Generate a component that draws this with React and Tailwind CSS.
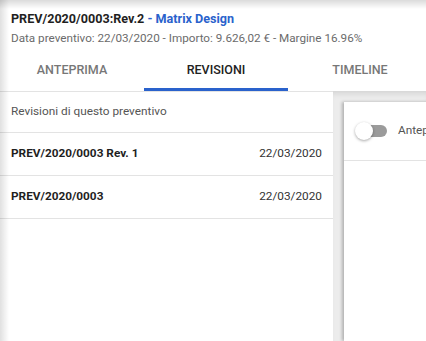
import React from "react";

function Toggle() {
  return (
    <div className="relative w-[32px] h-[18px] flex items-center shrink-0">
      <div className="ml-[4px] w-[28px] h-[12px] rounded-full bg-[#9b9b9b]" />
      <div className="absolute left-0 top-0 w-[18px] h-[18px] rounded-full bg-white shadow-[0_1px_3px_rgba(0,0,0,0.35)]" />
    </div>
  );
}

export default function App() {
  const rows = [
    { name: "PREV/2020/0003 Rev. 1", date: "22/03/2020" },
    { name: "PREV/2020/0003", date: "22/03/2020" },
  ];
  return (
    <div
      className="relative w-[426px] h-[341px] overflow-hidden bg-white text-[#222]"
      style={{ fontFamily: "Roboto, 'Liberation Sans', sans-serif" }}
    >
      <div className="flex flex-col h-full">
        <div className="pl-[11px] pt-[10px] h-[55px]">
          <div className="text-[12.6px] leading-[17px] font-bold text-[#1f1f1f]">
            PREV/2020/0003:Rev.2{" "}
            <span className="text-[#2a62cc]">- Matrix Design</span>
          </div>
          <div className="mt-[3px] text-[11.7px] leading-[16px] text-[#6b6b6b]">
            Data preventivo: 22/03/2020 - Importo: 9.626,02 € - Margine 16.96%
          </div>
        </div>
        <div className="flex w-[432px] h-[36px] shrink-0">
          <div className="w-[144px] flex justify-center pt-[7px] leading-[15px] text-[12.5px] font-medium text-[#777]">
            ANTEPRIMA
          </div>
          <div className="w-[144px] flex justify-center pt-[7px] leading-[15px] text-[12.5px] font-medium text-[#222] border-b-[3px] border-[#2a62cc]">
            REVISIONI
          </div>
          <div className="w-[144px] flex justify-center pt-[7px] leading-[15px] text-[12.5px] font-medium text-[#777]">
            TIMELINE
          </div>
        </div>
        <div className="flex flex-1 min-h-0">
          <div className="w-[333px] shrink-0 bg-white border-t border-[#e3e3e3]">
            <div className="h-[41px] flex items-center pl-[11px] border-b border-[#e3e3e3] text-[11.8px] text-[#555]">
              Revisioni di questo preventivo
            </div>
            {rows.map((r) => (
              <div
                key={r.name}
                className="h-[43px] flex items-center justify-between pl-[11px] pr-[11px] border-b border-[#e3e3e3] text-[11.8px]"
              >
                <span className="font-bold text-[#1f1f1f]">{r.name}</span>
                <span className="text-[#333]">{r.date}</span>
              </div>
            ))}
          </div>
          <div className="flex-1 min-w-0 overflow-hidden bg-[#ececec] pl-[11px] pt-[11px] shadow-[inset_0_6px_6px_-4px_rgba(0,0,0,0.12)]">
            <div className="h-full w-[200px] bg-white shadow-[-2px_0_3px_rgba(0,0,0,0.25)]">
              <div className="h-[59px] flex items-center pl-[11px] gap-[11px] border-b border-[#e3e3e3]">
                <Toggle />
                <span className="text-[11.8px] text-[#555] whitespace-nowrap">Anteprima</span>
              </div>
            </div>
          </div>
        </div>
      </div>
      <div className="pointer-events-none absolute inset-x-0 top-0 h-[9px] bg-gradient-to-b from-[rgba(0,0,0,0.14)] to-transparent" />
      <div className="pointer-events-none absolute inset-y-0 left-0 w-[9px] bg-gradient-to-r from-[rgba(0,0,0,0.12)] to-transparent" />
    </div>
  );
}
